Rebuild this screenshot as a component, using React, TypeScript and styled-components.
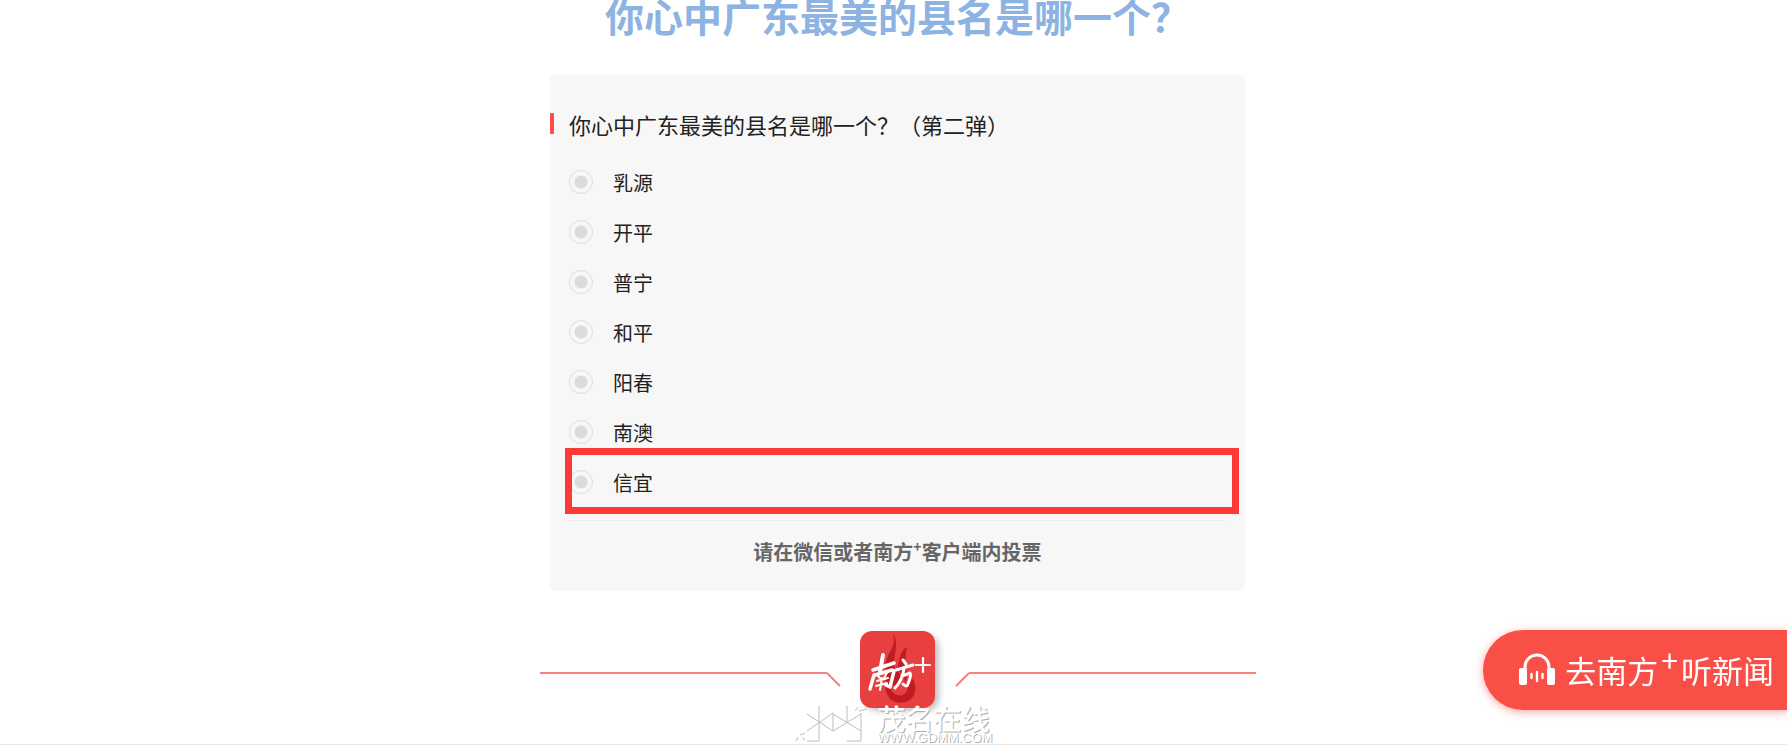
import React from "react";
import styled, { createGlobalStyle } from "styled-components";

const Global = createGlobalStyle`
  * { box-sizing: border-box; }
  html, body { margin: 0; background: #fff; overflow-x: hidden; }
  body { font-family: "Noto Sans CJK SC", sans-serif; color: #222; }
`;

const Page = styled.main`
  display: flex;
  flex-direction: column;
  align-items: center;
  padding-left: 8px;
  border-bottom: 1px solid #e9e9e9;
`;

const Title = styled.h1`
  margin: 0;
  font-size: 39px;
  line-height: 30px;
  font-weight: 700;
  color: #8db3e2;
  white-space: nowrap;
`;

const Card = styled.form`
  width: 100%;
  max-width: 695px;
  margin-top: 45px;
  padding: 30px 19px 24px;
  border-radius: 5px;
  background: #f7f7f7;
`;

const Question = styled.legend`
  position: relative;
  padding: 0 0 12px;
  font-size: 22px;
  line-height: 38px;
  &::before {
    content: "";
    position: absolute;
    left: -19px;
    top: 8px;
    width: 4px;
    height: 21px;
    border-radius: 1px;
    background: #fa4f46;
  }
`;

const Options = styled.fieldset`
  margin: 0;
  padding: 2px 0 13px;
  border: 0;
  border-bottom: 1px solid #ececec;
`;

const Option = styled.label<{ $marked?: boolean }>`
  position: relative;
  display: flex;
  align-items: center;
  gap: 20px;
  height: 50px;
  font-size: 20px;
  &::after {
    content: "";
    display: ${(p) => (p.$marked ? "block" : "none")};
    position: absolute;
    inset: -9px -13px -7px -4px;
    border: 7px solid #fd3838;
  }
`;

const Radio = styled.input`
  appearance: none;
  width: 24px;
  height: 24px;
  margin: 0;
  border: 1px solid #dedede;
  border-radius: 50%;
  background: radial-gradient(circle, #dcdcdc 6px, transparent 7px);
`;

const Notice = styled.p`
  margin: 16px 0 0;
  text-align: center;
  font-size: 20px;
  line-height: 30px;
  font-weight: 700;
  color: #666;
`;

const Plus = styled.sup<{ $size: number; $gap?: number }>`
  font-size: ${(p) => p.$size}px;
  line-height: 0;
  padding: 0 ${(p) => p.$gap ?? 0}px;
`;

const Divider = styled.div`
  display: flex;
  gap: 15px;
  width: 100%;
  max-width: 716px;
  margin-top: 36px;
`;

const Arm = styled.div<{ $side: "left" | "right" }>`
  display: flex;
  flex: 1;
  flex-direction: ${(p) => (p.$side === "left" ? "row" : "row-reverse")};
  align-items: flex-start;
  padding-top: 45px;
`;

const Rule = styled.div`
  flex: 1;
  height: 2px;
  background: #f98080;
`;

const BadgeArt = styled.svg`
  display: block;
  overflow: visible;
`;

const Watermark = styled.div`
  display: flex;
  gap: 6px;
  height: 40px;
  margin-top: -7px;
  margin-right: 8px;
  padding-top: 2px;
`;

const MarkText = styled.div`
  display: flex;
  flex-direction: column;
  color: #fff;
  text-shadow: 1px 1px 0 #adadad;
  white-space: nowrap;
`;

const MarkName = styled.span`
  font-size: 28px;
  line-height: 24px;
  font-weight: 500;
`;

const MarkSite = styled.span`
  font-family: "Liberation Sans", sans-serif;
  font-size: 13px;
  line-height: 15px;
`;

const Listen = styled.button`
  position: fixed;
  right: 0;
  bottom: 38px;
  display: flex;
  align-items: center;
  gap: 9px;
  height: 80px;
  padding: 0 13px 0 35px;
  border: 0;
  border-radius: 40px 0 0 40px;
  background: #fa4f46;
  box-shadow: 0 2px 8px rgba(250, 79, 70, 0.5);
  color: #fff;
  font-family: inherit;
  font-size: 31px;
  line-height: 40px;
  white-space: nowrap;
`;

const options = ["乳源", "开平", "普宁", "和平", "阳春", "南澳", "信宜"];

function Badge() {
  return (
    <BadgeArt width="84" height="84" viewBox="0 0 84 84" role="img" aria-label="南方+">
      <defs>
        <filter id="soft" x="-20%" y="-20%" width="150%" height="150%">
          <feGaussianBlur stdDeviation="3" />
        </filter>
      </defs>
      <rect x="9" y="8" width="74" height="76" rx="13" fill="#999" opacity=".6" filter="url(#soft)" />
      <rect x="4" y="4" width="75" height="77" rx="12" fill="#e83f41" />
      <path d="M37 6C42 22 27 27 30 43C32 53 27 59 31 67C36 79 53 78 58 68C61 61 59 54 55 50C55 56 52 59 49 58C53 47 47 39 51 20C42 25 45 34 40 43C34 34 45 18 37 6Z" fill="#c01c22" />
      <path d="M42 32C37 44 48 46 44 57C42 64 34 57 35 51C32 63 38 70 46 68C55 65 51 57 47 50C44 42 39 43 42 32Z" fill="#e83f41" />
      <g fill="none" stroke="#fff" strokeLinecap="round" strokeLinejoin="round">
        <path d="M17 43L38 36" strokeWidth="3.5" />
        <path d="M27 28L24 45" strokeWidth="4" />
        <path d="M18 48L14 62M19 48L36 43Q39 43 37 48L34 60L30 58" strokeWidth="3.5" />
        <path d="M22 49L25 52M31 46L28 51M21 54L32 51M20 59L31 56M26 51L24 63" strokeWidth="2" />
        <path d="M47 33L50 37M40 43L57 38M48 42Q46 54 39 61M46 49L54 46Q56 47 52 57Q51 61 47 57" strokeWidth="3" />
        <path d="M67 31V45M60 38H74" strokeWidth="2.2" />
      </g>
    </BadgeArt>
  );
}

function Elbow({ flip }: { flip?: boolean }) {
  return (
    <svg width="14" height="16" viewBox="0 0 14 16" aria-hidden="true">
      <path d={flip ? "M14 1L1 14" : "M0 1L13 14"} stroke="#f98080" strokeWidth="2" />
    </svg>
  );
}

function Emblem() {
  const d =
    "M24 0V35H12M12 8L38 25M12 25L38 7V25L66 8M38 8L66 25M52 0V16M66 7V35H52M60 5L63 1M64 5L72 3M1 35L3 31M5 29L10 27M7 32L10 34";
  return (
    <svg width="77" height="38" viewBox="0 0 77 38" fill="none" aria-hidden="true">
      <path d={d} stroke="#bdbdbd" />
    </svg>
  );
}

function Headphones() {
  return (
    <svg width="38" height="34" viewBox="0 0 38 34" aria-hidden="true">
      <path d="M7 17V14a12 12 0 0 1 24 0v3" fill="none" stroke="#fff" strokeWidth="3" />
      <rect x="1" y="15" width="8" height="17" rx="2" fill="#fff" />
      <rect x="29" y="15" width="8" height="17" rx="2" fill="#fff" />
      <path d="M13.5 21v4M19 19v9M24.5 21v4" stroke="#fff" strokeWidth="2.4" strokeLinecap="round" />
    </svg>
  );
}

export default function App() {
  return (
    <>
      <Global />
      <Page>
        <Title>{"你心中广东最美的县名是哪一个\uFF1F"}</Title>
        <Card>
          <Options>
            <Question>{"你心中广东最美的县名是哪一个\uFF1F\uFF08第二弹\uFF09"}</Question>
            {options.map((name) => (
              <Option key={name} $marked={name === "信宜"}>
                <Radio type="radio" name="county" value={name} />
                {name}
              </Option>
            ))}
          </Options>
          <Notice>
            请在微信或者南方<Plus $size={14}>+</Plus>客户端内投票
          </Notice>
        </Card>
        <Divider>
          <Arm $side="left"><Rule /><Elbow /></Arm>
          <Badge />
          <Arm $side="right"><Rule /><Elbow flip /></Arm>
        </Divider>
        <Watermark>
          <Emblem />
          <MarkText>
            <MarkName>茂名在线</MarkName>
            <MarkSite>WWW.GDMM.COM</MarkSite>
          </MarkText>
        </Watermark>
        <Listen type="button">
          <Headphones />
          <span>去南方<Plus $size={30} $gap={3}>+</Plus>听新闻</span>
        </Listen>
      </Page>
    </>
  );
}
